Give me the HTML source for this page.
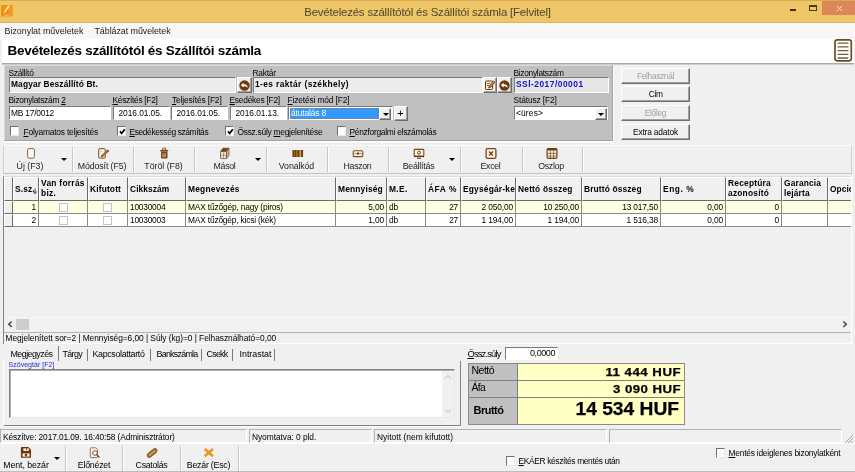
<!DOCTYPE html>
<html lang="hu"><head><meta charset="utf-8"><title>Bevételezés szállítótól és Szállítói számla [Felvitel]</title>
<style>
html,body{margin:0;padding:0;}
body{width:855px;height:472px;overflow:hidden;background:#f0f0f0;font-family:"Liberation Sans",sans-serif;font-size:8.4px;color:#000;position:relative;}
.a{position:absolute;white-space:nowrap;}
.t{margin-left:-0.5px;z-index:2;position:absolute;white-space:nowrap;line-height:10px;font-size:8.4px;}
u{text-decoration:underline;}
#titlebar{left:0;top:0;width:855px;height:22.5px;background:#efc667;border-top:1px solid #d9ae52;border-bottom:1px solid #dcb65c;box-sizing:border-box;}
#menubar{left:0;top:22.5px;width:855px;height:17.5px;background:#f7f7f8;}
#hdr{left:1.5px;top:39px;width:852px;height:23.5px;background:#fff;border-bottom:1px solid #a8a8a8;box-shadow:0 1px 0 #cdcdcd;box-sizing:content-box;}
#gp{left:4px;top:65px;width:609px;height:76px;background:#c0c0c0;border:1px solid;border-color:#d8d8d8 #a4a4a4 #a0a0a0 #d8d8d8;box-sizing:border-box;box-shadow:1px 1.5px 0 #fff;}
.fld{position:absolute;box-sizing:border-box;height:16px;border:1px solid;border-color:#7a7a7a #fff #fff #7a7a7a;background:#fff;font-size:8.4px;line-height:13px;padding-left:1px;white-space:nowrap;overflow:hidden;}
.f2{height:14px;line-height:12px;}
.ro{background:#ececec;font-weight:bold;}
.btn{position:absolute;box-sizing:border-box;background:#f0f0f0;border:1px solid;border-color:#fff #6d6d6d #6d6d6d #fff;box-shadow:inset -1px -1px 0 #a0a0a0;text-align:center;font-size:8.4px;line-height:15px;white-space:nowrap;}
.dis{color:#a0a0a0;}
.cb{position:absolute;box-sizing:border-box;width:9px;height:9.5px;background:#fff;border:1px solid;border-color:#707070 #e8e8e8 #e8e8e8 #707070;}
.sep{position:absolute;width:1px;background:#c6c6c6;box-shadow:1px 0 0 #fff;}
.hc{box-sizing:border-box;background:#f0f0f0;border:1px solid;border-color:#fff #6a6a6a #6a6a6a #fff;}
.hct{position:absolute;left:1px;font-weight:bold;font-size:8.4px;line-height:10px;white-space:nowrap;}
.ic{box-sizing:border-box;background:#f0f0f0;border:1px solid;border-color:#fff #6a6a6a #6a6a6a #fff;}
.gc{box-sizing:border-box;border-right:1px solid #8a8a8a;border-bottom:1px solid #8a8a8a;font-size:8.4px;line-height:13px;padding:0 2px;overflow:hidden;}
.gc.r{text-align:right;}.gc.c{text-align:center;}
.gcb{display:inline-block;box-sizing:border-box;width:9px;height:9px;background:#fff;border:1px solid #c4c4c4;vertical-align:top;margin-top:1.5px;}
.sp{padding-top:1px;box-sizing:border-box;border:1px solid;border-color:#b2b2b2 #fff #fff #b2b2b2;font-size:8.4px;line-height:12px;padding-left:2px;overflow:hidden;}
.arr{position:absolute;width:0;height:0;border-style:solid;border-color:#000 transparent transparent transparent;border-width:3px 3px 0 3px;}
#root{position:absolute;left:0;top:0;width:855px;height:472px;will-change:transform;}
</style></head><body>
<div id="root">
<div class="a" id="titlebar"></div>
<div class="a" style="left:0;width:855px;top:4.5px;text-align:center;font-size:11.4px;line-height:14px;color:#4a452f;letter-spacing:-0.17px;">Bevételezés szállítótól és Szállítói számla [Felvitel]</div>
<div class="a" id="menubar"></div>
<div class="t" style="left:5px;top:26px;font-size:8.9px;letter-spacing:0.00px;color:#222;line-height:11px;">Bizonylat műveletek</div>
<div class="t" style="left:95px;top:26px;font-size:8.9px;letter-spacing:-0.05px;color:#222;line-height:11px;">Táblázat műveletek</div>
<div class="a" id="hdr"></div>
<div class="t" style="left:8px;top:43px;font-size:13.5px;font-weight:bold;letter-spacing:-0.28px;line-height:16px;">Bevételezés szállítótól és Szállítói számla</div>
<div class="a" style="left:822px;top:1px;width:33px;height:14px;background:#dc875a;"></div>
<svg class="a" style="left:835px;top:4px" width="9" height="9" viewBox="0 0 9 9"><path d="M1.8 1.8L7.2 7.2M7.2 1.8L1.8 7.2" stroke="#ffe4d0" stroke-width="1"/></svg>
<div class="a" style="left:809px;top:5px;width:7.5px;height:6px;box-sizing:border-box;border:1px solid #4a3a1a;border-top-width:2px;"></div>
<div class="a" style="left:789.5px;top:9px;width:6px;height:2px;background:#3a2e14;"></div>
<svg class="a" style="left:1.3px;top:5px" width="11.7" height="11.5" viewBox="0 0 11.7 11.5"><rect width="11.7" height="11.5" fill="#f0920f"/><path d="M5.5 0H11.7V11.5H9Z" fill="#f2a02a" opacity="0.6"/><path d="M3 6.8L7.4 0.6L8.6 1.1L4.2 7.4Z" fill="#fff5e6"/><path d="M2.6 8.2L3.4 6.6" stroke="#fbd9a8" stroke-width="0.8"/><path d="M3.6 10.2h4.6" stroke="#f9cf98" stroke-width="0.9"/></svg>
<svg class="a" style="left:834px;top:39px" width="18.5" height="23" viewBox="0 0 18.5 23"><rect x="1" y="0.8" width="16.3" height="21" rx="2.2" fill="#fff" stroke="#6b4a25" stroke-width="1.7"/><path d="M3.6 4.2h10.8M3.6 7.9h10.8M3.6 11.6h10.8M3.6 15.3h10.8M3.6 19h10.8" stroke="#7a5a3a" stroke-width="1.3"/></svg>
<div class="a" id="gp"></div>
<div class="t" style="left:9px;top:68px;letter-spacing:-0.31px;">Szállító</div>
<div class="fld ro" style="left:9px;top:77px;width:227px;letter-spacing:0.13px;">Magyar Beszállító Bt.</div>
<div class="btn" style="left:237px;top:77px;width:15px;height:16px"></div><svg class="a" style="left:239px;top:79.5px" width="11" height="11" viewBox="0 0 11 11"><circle cx="5.5" cy="5.5" r="5.2" fill="#6e3a0c"/><path d="M1.8 5.2 L4.6 2.8 L4.6 4.3 C7.2 4.2 8.8 5.4 8.6 8 C8 6.6 6.8 6.1 4.6 6.2 L4.6 7.6 Z" fill="#fff"/></svg>
<div class="t" style="left:253px;top:68px;letter-spacing:-0.25px;">Raktár</div>
<div class="fld ro" style="left:253px;top:77px;width:230px;letter-spacing:0.40px;">1-es raktár (székhely)</div>
<div class="btn" style="left:483px;top:77px;width:14px;height:16px"></div>
<svg class="a" style="left:484px;top:79px" width="12" height="12" viewBox="0 0 12 12"><rect x="1.5" y="2" width="7" height="8.5" rx="0.8" fill="#f6ead8" stroke="#6e3a0c" stroke-width="1"/><path d="M3 4.5h3M3 6.5h2" stroke="#6e3a0c" stroke-width="0.7"/><path d="M4.6 9 L5.3 6.8 L9.6 2 L11 3.3 L6.8 8.2 Z" fill="#c98a4a" stroke="#6e3a0c" stroke-width="0.8"/></svg>
<div class="btn" style="left:497px;top:77px;width:15px;height:16px"></div><svg class="a" style="left:499px;top:79.5px" width="11" height="11" viewBox="0 0 11 11"><circle cx="5.5" cy="5.5" r="5.2" fill="#6e3a0c"/><path d="M1.8 5.2 L4.6 2.8 L4.6 4.3 C7.2 4.2 8.8 5.4 8.6 8 C8 6.6 6.8 6.1 4.6 6.2 L4.6 7.6 Z" fill="#fff"/></svg>
<div class="t" style="left:514px;top:68px;letter-spacing:-0.30px;">Bizonylatszám</div>
<div class="fld ro" style="left:514px;top:77px;width:95px;letter-spacing:0.50px;color:#1212c6;background:#e6e6e6;">SSl-2017/00001</div>
<div class="t" style="left:9px;top:95px;letter-spacing:-0.26px;">Bizonylatszám <u>2</u></div>
<div class="t" style="left:113px;top:95px;letter-spacing:-0.29px;"><u>K</u>észítés [F2]</div>
<div class="t" style="left:172.5px;top:95px;letter-spacing:-0.14px;"><u>T</u>eljesítés [F2]</div>
<div class="t" style="left:230px;top:95px;letter-spacing:-0.24px;"><u>E</u>sedékes [F2]</div>
<div class="t" style="left:288px;top:95px;letter-spacing:-0.14px;"><u>F</u>izetési mód [F2]</div>
<div class="t" style="left:514px;top:95px;letter-spacing:-0.12px;">Státusz [F2]</div>
<div class="fld f2" style="left:9px;top:106px;width:102px;letter-spacing:-0.21px;">MB 17/0012</div>
<div class="fld f2" style="left:113px;top:106px;width:57px;letter-spacing:-0.06px;padding-left:4.5px;">2016.01.05.</div>
<div class="fld f2" style="left:171px;top:106px;width:57px;letter-spacing:-0.06px;padding-left:4.5px;">2016.01.05.</div>
<div class="fld f2" style="left:230px;top:106px;width:57px;letter-spacing:-0.06px;padding-left:4.5px;">2016.01.13.</div>
<div class="fld f2" style="left:288px;top:106px;width:105px;letter-spacing:-0.13px;"><span style="display:inline-block;width:88.5px;height:11px;margin-top:0.5px;line-height:11px;background:#3399ff;color:#fff;margin-left:0;padding-left:1px;vertical-align:top;box-sizing:border-box;outline:1px dotted rgba(190,110,20,0.75);outline-offset:-1px">átutalás 8</span></div>
<div class="btn " style="left:379px;top:107.5px;width:12px;height:12px;"></div>
<div class="arr" style="left:382.5px;top:112.5px;"></div>
<div class="btn " style="left:394px;top:106px;width:14px;height:14.5px;letter-spacing:0.98px;line-height:12px;font-size:11px;">+</div>
<div class="fld f2" style="left:514px;top:106px;width:94px;letter-spacing:0.16px;">&lt;üres&gt;</div>
<div class="btn " style="left:594.5px;top:107.5px;width:12px;height:12px;"></div>
<div class="arr" style="left:598px;top:112.5px;"></div>
<div class="cb" style="left:10px;top:126px"></div>
<div class="t" style="left:24px;top:127px;letter-spacing:-0.20px;"><u>F</u>olyamatos teljesítés</div>
<div class="cb" style="left:117px;top:126px"><svg class="a" style="left:1px;top:1px" width="7" height="7" viewBox="0 0 7 7"><path d="M0.9 3.3L2.7 5.3L5.8 1.3" fill="none" stroke="#000" stroke-width="1.8"/></svg></div>
<div class="t" style="left:130px;top:127px;letter-spacing:-0.37px;"><u>E</u>sedékesség számítás</div>
<div class="cb" style="left:225px;top:126px"><svg class="a" style="left:1px;top:1px" width="7" height="7" viewBox="0 0 7 7"><path d="M0.9 3.3L2.7 5.3L5.8 1.3" fill="none" stroke="#000" stroke-width="1.8"/></svg></div>
<div class="t" style="left:238px;top:127px;letter-spacing:-0.26px;">Össz.súly <u>m</u>egjelenítése</div>
<div class="cb" style="left:337px;top:126px"></div>
<div class="t" style="left:350px;top:127px;letter-spacing:-0.27px;"><u>P</u>énzforgalmi elszámolás</div>
<div class="btn dis" style="left:621px;top:68px;width:69px;height:16px;letter-spacing:-0.36px;line-height:14.5px;">Felhasznál</div>
<div class="btn " style="left:621px;top:86px;width:69px;height:16px;letter-spacing:-0.62px;line-height:14.5px;">Cím</div>
<div class="btn dis" style="left:621px;top:105px;width:69px;height:16px;letter-spacing:-0.32px;line-height:14.5px;">Előleg</div>
<div class="btn " style="left:621px;top:124px;width:69px;height:16px;letter-spacing:-0.17px;line-height:14.5px;">Extra adatok</div>
<div class="a" style="left:3px;top:145px;width:849px;height:29px;box-sizing:border-box;border-top:1px solid #fafafa;border-bottom:1px solid #c4c4c4;border-right:1px solid #d0d0d0;border-left:1px solid #cfcfcf"></div>
<div class="sep" style="left:72px;top:147px;height:25px;"></div>
<div class="sep" style="left:133px;top:147px;height:25px;"></div>
<div class="sep" style="left:194px;top:147px;height:25px;"></div>
<div class="sep" style="left:266px;top:147px;height:25px;"></div>
<div class="sep" style="left:327px;top:147px;height:25px;"></div>
<div class="sep" style="left:388px;top:147px;height:25px;"></div>
<div class="sep" style="left:460px;top:147px;height:25px;"></div>
<div class="sep" style="left:522px;top:147px;height:25px;"></div>
<div class="sep" style="left:582px;top:147px;height:25px;"></div>
<div class="t" style="left:-14.5px;width:90px;text-align:center;top:161px;font-size:8.8px;letter-spacing:-0.00px;color:#222;">Új (F3)</div>
<div class="t" style="left:57.5px;width:90px;text-align:center;top:161px;font-size:8.8px;letter-spacing:-0.11px;color:#222;">Módosít (F5)</div>
<div class="t" style="left:119.0px;width:90px;text-align:center;top:161px;font-size:8.8px;letter-spacing:-0.02px;color:#222;">Töröl (F8)</div>
<div class="t" style="left:180.0px;width:90px;text-align:center;top:161px;font-size:8.8px;letter-spacing:-0.31px;color:#222;">Másol</div>
<div class="t" style="left:252.0px;width:90px;text-align:center;top:161px;font-size:8.8px;letter-spacing:-0.11px;color:#222;">Vonalkód</div>
<div class="t" style="left:313.0px;width:90px;text-align:center;top:161px;font-size:8.8px;letter-spacing:-0.33px;color:#222;">Haszon</div>
<div class="t" style="left:374.0px;width:90px;text-align:center;top:161px;font-size:8.8px;letter-spacing:-0.23px;color:#222;">Beállítás</div>
<div class="t" style="left:446.0px;width:90px;text-align:center;top:161px;font-size:8.8px;letter-spacing:-0.34px;color:#222;">Excel</div>
<div class="t" style="left:506.5px;width:90px;text-align:center;top:161px;font-size:8.8px;letter-spacing:-0.32px;color:#222;">Oszlop</div>
<div class="arr" style="left:60.5px;top:158px"></div>
<div class="arr" style="left:254.5px;top:158px"></div>
<div class="arr" style="left:448.5px;top:158px"></div>
<svg class="a" style="left:24.0px;top:147px" width="14" height="14" viewBox="0 0 14 14"><rect x="3.6" y="1.6" width="6.8" height="9.6" rx="1.5" fill="#fdfcfa" stroke="#7a6040" stroke-width="0.95"/></svg>
<svg class="a" style="left:96.0px;top:147px" width="14" height="14" viewBox="0 0 14 14"><rect x="2.7" y="1.6" width="6.6" height="9.6" rx="1.2" fill="#f6f2ec" stroke="#7a4a22" stroke-width="1"/><path d="M4.2 4.2h2" stroke="#b9b0a0" stroke-width="0.9"/><path d="M5.9 9.3L12 3.6" stroke="#a46c34" stroke-width="2.3"/><path d="M4.9 10.3L6.9 9.9L5.4 8.4Z" fill="#5a3310"/><path d="M11.2 2.9L12.8 4.4" stroke="#6e3f14" stroke-width="1.2"/></svg>
<svg class="a" style="left:157.0px;top:147px" width="14" height="14" viewBox="0 0 14 14"><rect x="4" y="4.6" width="6.5" height="7" rx="0.8" fill="#7a4510"/><rect x="3.2" y="2.9" width="8" height="1.6" rx="0.4" fill="#7a4510"/><rect x="5.5" y="1.2" width="3.4" height="2" rx="0.6" fill="none" stroke="#7a4510" stroke-width="0.9"/><path d="M6.1 6.3v3.9M8.1 6.3v3.9" stroke="#ecd9b8" stroke-width="0.9"/></svg>
<svg class="a" style="left:218.0px;top:147px" width="14" height="14" viewBox="0 0 14 14"><path d="M2.5 4.5L5 1.2H11L8.5 4.5Z" fill="#7a3f0a" stroke="#6a3808" stroke-width="0.6"/><path d="M8.5 4.5L11 1.2V8.4L8.5 11.6Z" fill="#c9b596" stroke="#6a4a28" stroke-width="0.7"/><rect x="2.5" y="4.5" width="6" height="7.1" rx="0.8" fill="#e8e1d2" stroke="#6a4a28" stroke-width="0.8"/><path d="M5.5 5.5v5.3M3.4 8.3h4.3" stroke="#8a7a60" stroke-width="0.7"/></svg>
<svg class="a" style="left:290.5px;top:147px" width="14" height="14" viewBox="0 0 14 14"><rect x="1.5" y="3" width="10.6" height="7" rx="0.6" fill="#a06a2c"/><path d="M2.3 3v7M4.3 3v7M7.2 3v7" stroke="#6e3f10" stroke-width="1.2"/><path d="M11 3v7" stroke="#6e3f10" stroke-width="2"/><path d="M9.4 3v7" stroke="#e8d4b0" stroke-width="0.6"/></svg>
<svg class="a" style="left:351.0px;top:147px" width="14" height="14" viewBox="0 0 14 14"><rect x="2.2" y="3.7" width="9.6" height="5.9" rx="1.3" fill="#f6f1dc" stroke="#7a4a22" stroke-width="1.1"/><path d="M3 6.6h8" stroke="#8a6a48" stroke-width="0.7"/><ellipse cx="7" cy="6.6" rx="0.9" ry="1.3" fill="#6e2f08"/></svg>
<svg class="a" style="left:412.0px;top:147px" width="14" height="14" viewBox="0 0 14 14"><rect x="2.2" y="2.4" width="9.6" height="7" rx="0.6" fill="#fbf6ec" stroke="#7a4510" stroke-width="1.1"/><path d="M2 9.4h10" stroke="#5a3008" stroke-width="1.3"/><circle cx="7" cy="5.7" r="1.6" fill="#e8d8c0" stroke="#6e4a28" stroke-width="0.9"/><path d="M5 11.3h4" stroke="#6e4a28" stroke-width="1.2"/></svg>
<svg class="a" style="left:484.0px;top:147px" width="14" height="14" viewBox="0 0 14 14"><rect x="2.1" y="1.6" width="9.8" height="9.8" rx="1.4" fill="#fbf6e6" stroke="#7a4010" stroke-width="1.3"/><path d="M5 4.6l4 3.9M9 4.6l-4 3.9" stroke="#7a4010" stroke-width="1.4"/></svg>
<svg class="a" style="left:545.0px;top:147px" width="14" height="14" viewBox="0 0 14 14"><rect x="2.1" y="1.6" width="9.8" height="9.8" rx="1.2" fill="#fdf8ea" stroke="#6e3f10" stroke-width="1.2"/><rect x="2.1" y="1.6" width="9.8" height="1.9" rx="0.8" fill="#6e3f10"/><path d="M5.4 3.5v8M8.6 3.5v8M2 6.4h10M2 9.1h10" stroke="#7a5020" stroke-width="0.75"/></svg>
<div class="a" style="left:3px;top:176px;width:849px;height:168px;box-sizing:border-box;border-left:1px solid #828282;border-top:1px solid #dcdcdc;"></div>
<div class="a hc" style="left:4px;top:177px;width:9px;height:24px;overflow:hidden"><div class="hct" style="top:5.5px;"></div></div>
<div class="a hc" style="left:13px;top:177px;width:26px;height:24px;overflow:hidden"><div class="hct" style="top:5.5px;letter-spacing:0.13px;">S.sz.</div></div>
<div class="a hc" style="left:39px;top:177px;width:49px;height:24px;overflow:hidden"><div class="hct" style="top:0px;letter-spacing:0.28px;">Van forrás<br>biz.</div></div>
<div class="a hc" style="left:88px;top:177px;width:40px;height:24px;overflow:hidden"><div class="hct" style="top:5.5px;letter-spacing:0.16px;">Kifutott</div></div>
<div class="a hc" style="left:128px;top:177px;width:58px;height:24px;overflow:hidden"><div class="hct" style="top:5.5px;letter-spacing:0.08px;">Cikkszám</div></div>
<div class="a hc" style="left:186px;top:177px;width:150px;height:24px;overflow:hidden"><div class="hct" style="top:5.5px;letter-spacing:0.24px;">Megnevezés</div></div>
<div class="a hc" style="left:336px;top:177px;width:51px;height:24px;overflow:hidden"><div class="hct" style="top:5.5px;letter-spacing:0.18px;">Mennyiség</div></div>
<div class="a hc" style="left:387px;top:177px;width:39px;height:24px;overflow:hidden"><div class="hct" style="top:5.5px;letter-spacing:0.35px;">M.E.</div></div>
<div class="a hc" style="left:426px;top:177px;width:35px;height:24px;overflow:hidden"><div class="hct" style="top:5.5px;letter-spacing:0.54px;">ÁFA %</div></div>
<div class="a hc" style="left:461px;top:177px;width:55px;height:24px;overflow:hidden"><div class="hct" style="top:5.5px;letter-spacing:0.20px;">Egységár-ke</div></div>
<div class="a hc" style="left:516px;top:177px;width:66px;height:24px;overflow:hidden"><div class="hct" style="top:5.5px;letter-spacing:0.21px;">Nettó összeg</div></div>
<div class="a hc" style="left:582px;top:177px;width:79px;height:24px;overflow:hidden"><div class="hct" style="top:5.5px;letter-spacing:0.14px;">Bruttó összeg</div></div>
<div class="a hc" style="left:661px;top:177px;width:65px;height:24px;overflow:hidden"><div class="hct" style="top:5.5px;letter-spacing:0.58px;">Eng. %</div></div>
<div class="a hc" style="left:726px;top:177px;width:56px;height:24px;overflow:hidden"><div class="hct" style="top:0px;letter-spacing:0.22px;">Receptúra<br>azonosító</div></div>
<div class="a hc" style="left:782px;top:177px;width:46px;height:24px;overflow:hidden"><div class="hct" style="top:0px;letter-spacing:0.15px;">Garancia<br>lejárta</div></div>
<div class="a hc" style="left:828px;top:177px;width:24px;height:24px;overflow:hidden"><div class="hct" style="top:5.5px;letter-spacing:0.05px;">Opció</div></div>
<div class="a ic" style="left:4px;top:201px;width:9px;height:13px;"></div>
<div class="a gc r" style="left:13px;top:201px;width:26px;height:13px;background:#ffffe1;letter-spacing:-0.26px;">1</div>
<div class="a gc c" style="left:39px;top:201px;width:49px;height:13px;background:#ffffe1;"><div class="gcb"></div></div>
<div class="a gc c" style="left:88px;top:201px;width:40px;height:13px;background:#ffffe1;"><div class="gcb"></div></div>
<div class="a gc l" style="left:128px;top:201px;width:58px;height:13px;background:#ffffe1;letter-spacing:-0.24px;">10030004</div>
<div class="a gc l" style="left:186px;top:201px;width:150px;height:13px;background:#ffffe1;letter-spacing:-0.17px;">MAX tűzőgép, nagy (piros)</div>
<div class="a gc r" style="left:336px;top:201px;width:51px;height:13px;background:#ffffe1;letter-spacing:-0.16px;">5,00</div>
<div class="a gc l" style="left:387px;top:201px;width:39px;height:13px;background:#ffffe1;letter-spacing:-0.20px;">db</div>
<div class="a gc r" style="left:426px;top:201px;width:35px;height:13px;background:#ffffe1;letter-spacing:-0.25px;">27</div>
<div class="a gc r" style="left:461px;top:201px;width:55px;height:13px;background:#ffffe1;letter-spacing:-0.14px;">2 050,00</div>
<div class="a gc r" style="left:516px;top:201px;width:66px;height:13px;background:#ffffe1;letter-spacing:-0.16px;">10 250,00</div>
<div class="a gc r" style="left:582px;top:201px;width:79px;height:13px;background:#ffffe1;letter-spacing:-0.16px;">13 017,50</div>
<div class="a gc r" style="left:661px;top:201px;width:65px;height:13px;background:#ffffe1;letter-spacing:-0.16px;">0,00</div>
<div class="a gc r" style="left:726px;top:201px;width:56px;height:13px;background:#ffffe1;letter-spacing:-0.26px;">0</div>
<div class="a gc l" style="left:782px;top:201px;width:46px;height:13px;background:#ffffe1;"></div>
<div class="a gc l" style="left:828px;top:201px;width:24px;height:13px;background:#ffffe1;"></div>
<div class="a ic" style="left:4px;top:214px;width:9px;height:13px;"></div>
<div class="a gc r" style="left:13px;top:214px;width:26px;height:13px;background:#ffffff;letter-spacing:-0.26px;">2</div>
<div class="a gc c" style="left:39px;top:214px;width:49px;height:13px;background:#ffffff;"><div class="gcb"></div></div>
<div class="a gc c" style="left:88px;top:214px;width:40px;height:13px;background:#ffffff;"><div class="gcb"></div></div>
<div class="a gc l" style="left:128px;top:214px;width:58px;height:13px;background:#ffffff;letter-spacing:-0.24px;">10030003</div>
<div class="a gc l" style="left:186px;top:214px;width:150px;height:13px;background:#ffffff;letter-spacing:-0.18px;">MAX tűzőgép, kicsi (kék)</div>
<div class="a gc r" style="left:336px;top:214px;width:51px;height:13px;background:#ffffff;letter-spacing:-0.16px;">1,00</div>
<div class="a gc l" style="left:387px;top:214px;width:39px;height:13px;background:#ffffff;letter-spacing:-0.20px;">db</div>
<div class="a gc r" style="left:426px;top:214px;width:35px;height:13px;background:#ffffff;letter-spacing:-0.25px;">27</div>
<div class="a gc r" style="left:461px;top:214px;width:55px;height:13px;background:#ffffff;letter-spacing:-0.14px;">1 194,00</div>
<div class="a gc r" style="left:516px;top:214px;width:66px;height:13px;background:#ffffff;letter-spacing:-0.14px;">1 194,00</div>
<div class="a gc r" style="left:582px;top:214px;width:79px;height:13px;background:#ffffff;letter-spacing:-0.14px;">1 516,38</div>
<div class="a gc r" style="left:661px;top:214px;width:65px;height:13px;background:#ffffff;letter-spacing:-0.16px;">0,00</div>
<div class="a gc r" style="left:726px;top:214px;width:56px;height:13px;background:#ffffff;letter-spacing:-0.26px;">0</div>
<div class="a gc l" style="left:782px;top:214px;width:46px;height:13px;background:#ffffff;"></div>
<div class="a gc l" style="left:828px;top:214px;width:24px;height:13px;background:#ffffff;"></div>
<svg class="a" style="left:32px;top:188px" width="6" height="7" viewBox="0 0 6 7"><path d="M3 0.5v4" stroke="#6a6a6a" stroke-width="1.2"/><path d="M0.6 3.4L3 6.4L5.4 3.4Z" fill="#6a6a6a"/></svg>
<div class="a" style="left:4px;top:317px;width:847px;height:16px;background:#f1f1f1;border-top:1px solid #f6f6f6;border-bottom:1px solid #b2b2b2;box-sizing:border-box"></div>
<div class="a" style="left:851px;top:176px;width:1px;height:168px;background:#fff"></div>
<div class="a" style="left:16px;top:319px;width:13px;height:11px;background:#cdcdcd"></div>
<svg class="a" style="left:7px;top:320px" width="6" height="9" viewBox="0 0 6 9"><path d="M4.6 1.5L1.7 4.3L4.6 7.1" fill="none" stroke="#404040" stroke-width="1.4"/></svg>
<svg class="a" style="left:842px;top:320px" width="6" height="9" viewBox="0 0 6 9"><path d="M1.4 1.5L4.3 4.3L1.4 7.1" fill="none" stroke="#404040" stroke-width="1.4"/></svg>
<div class="t" style="left:6px;top:333px;letter-spacing:-0.05px;">Megjelenített sor=2 | Mennyiség=6,00 | Súly (kg)=0 | Felhasználható=0,00</div>
<div class="a" style="left:4px;top:343px;width:848px;height:1px;background:#fff"></div>
<div class="t" style="left:11px;top:349px;font-size:8.9px;letter-spacing:-0.54px;">Megjegyzés</div>
<div class="t" style="left:63px;top:349px;font-size:8.9px;letter-spacing:-0.64px;">Tárgy</div>
<div class="t" style="left:93px;top:349px;font-size:8.9px;letter-spacing:-0.34px;">Kapcsolattartó</div>
<div class="t" style="left:157px;top:349px;font-size:8.9px;letter-spacing:-0.73px;">Bankszámla</div>
<div class="t" style="left:207px;top:349px;font-size:8.9px;letter-spacing:-0.73px;">Csekk</div>
<div class="t" style="left:240px;top:349px;font-size:8.9px;letter-spacing:-0.01px;">Intrastat</div>
<div class="a" style="left:58px;top:346px;width:1px;height:15px;background:#7a7a7a"></div>
<div class="a" style="left:87px;top:349px;width:1px;height:12px;background:#7a7a7a"></div>
<div class="a" style="left:150px;top:349px;width:1px;height:12px;background:#7a7a7a"></div>
<div class="a" style="left:201px;top:349px;width:1px;height:12px;background:#7a7a7a"></div>
<div class="a" style="left:232px;top:349px;width:1px;height:12px;background:#7a7a7a"></div>
<div class="a" style="left:274px;top:349px;width:1px;height:12px;background:#7a7a7a"></div>
<div class="t" style="left:9px;top:360px;font-size:7px;letter-spacing:0.03px;line-height:9px;color:#2828d8;">Szövegtár [F2]</div>
<div class="a" style="left:3px;top:361px;width:458px;height:65px;box-sizing:border-box;border-right:1px solid #828282;border-bottom:1px solid #828282;border-left:1px solid #fff"></div>
<div class="a" style="left:3px;top:426px;width:459px;height:1px;background:#fff"></div>
<div class="a" style="left:9px;top:369px;width:446px;height:49px;box-sizing:border-box;background:#fff;border:1px solid;border-color:#828282 #e8e8e8 #e8e8e8 #828282;box-shadow:inset 1px 1px 0 #b0b0b0"></div>
<div class="a" style="left:442px;top:371px;width:12px;height:46px;background:#f0f0f0"></div>
<svg class="a" style="left:444px;top:374px" width="8" height="6" viewBox="0 0 8 6"><path d="M1 4.5L4 1.5L7 4.5" fill="none" stroke="#b8b8b8" stroke-width="1"/></svg>
<svg class="a" style="left:444px;top:408px" width="8" height="6" viewBox="0 0 8 6"><path d="M1 1.5L4 4.5L7 1.5" fill="none" stroke="#b8b8b8" stroke-width="1"/></svg>
<div class="t" style="left:468px;top:349px;font-size:9.3px;letter-spacing:-0.81px;"><u>Ö</u>ssz.súly</div>
<div class="fld" style="left:505px;top:347px;width:53px;height:13px;text-align:right;padding-right:2px;line-height:11px;font-size:9px;letter-spacing:-0.42px;">0,0000</div>
<div class="a" style="left:468px;top:363px;width:217px;height:62px;box-sizing:border-box;border:1px solid #8a8a8a;background:#ffffc4"></div>
<div class="a" style="left:469px;top:364px;width:49px;height:60px;background:#c0c0c0;border-right:1px solid #808080;box-sizing:border-box"></div>
<div class="a" style="left:469px;top:380px;width:215px;height:1px;background:#808080"></div>
<div class="a" style="left:469px;top:397px;width:215px;height:1px;background:#808080"></div>
<div class="t" style="left:472px;top:364px;font-size:10.5px;letter-spacing:-0.52px;line-height:13px;">Nettó</div>
<div class="t" style="left:472px;top:381px;font-size:10.5px;letter-spacing:-0.76px;line-height:13px;">Áfa</div>
<div class="t" style="left:474px;top:404px;font-size:11px;font-weight:bold;letter-spacing:-0.50px;line-height:13px;">Bruttó</div>
<div class="a" style="left:510.70000000000005px;width:170px;text-align:right;top:365px;font-weight:bold;font-size:11.8px;line-height:14px;transform:scaleX(1.12);transform-origin:100% 50%;-webkit-text-stroke:0.25px #000;letter-spacing:0.45px;">11 444 HUF</div>
<div class="a" style="left:510.70000000000005px;width:170px;text-align:right;top:382px;font-weight:bold;font-size:11.8px;line-height:14px;transform:scaleX(1.12);transform-origin:100% 50%;-webkit-text-stroke:0.25px #000;letter-spacing:0.41px;">3 090 HUF</div>
<div class="a" style="left:509px;width:170px;text-align:right;top:399px;font-weight:bold;font-size:17.8px;line-height:21px;transform:scaleX(1.08);transform-origin:100% 50%;-webkit-text-stroke:0.25px #000;letter-spacing:-0.00px;">14 534 HUF</div>
<div class="a sp" style="left:0px;top:429px;width:247px;height:14px;letter-spacing:-0.12px;">Készítve: 2017.01.09. 16:40:58 (Adminisztrátor)</div>
<div class="a sp" style="left:249px;top:429px;width:123px;height:14px;letter-spacing:-0.06px;">Nyomtatva: 0 pld.</div>
<div class="a sp" style="left:374px;top:429px;width:233px;height:14px;letter-spacing:0.05px;">Nyitott (nem kifutott)</div>
<div class="a sp" style="left:609px;top:429px;width:233px;height:14px;"></div>
<svg class="a" style="left:844px;top:434px" width="10" height="10" viewBox="0 0 10 10"><path d="M9 1L1 9M9 4L4 9M9 7L7 9" stroke="#a0a0a0" stroke-width="1"/></svg>
<div class="a" style="left:0;top:443px;width:855px;height:1px;background:#fff"></div>
<div class="a" style="left:0;top:471px;width:855px;height:1px;background:#bdbdbd"></div>
<div class="sep" style="left:65px;top:446px;height:25px;"></div>
<div class="sep" style="left:122px;top:446px;height:25px;"></div>
<div class="sep" style="left:180px;top:446px;height:25px;"></div>
<div class="sep" style="left:238px;top:446px;height:25px;"></div>
<div class="t" style="left:-18.5px;width:90px;text-align:center;top:460px;font-size:8.8px;letter-spacing:-0.09px;">Ment, bezár</div>
<div class="t" style="left:49.5px;width:90px;text-align:center;top:460px;font-size:8.8px;letter-spacing:-0.22px;">Előnézet</div>
<div class="t" style="left:107.0px;width:90px;text-align:center;top:460px;font-size:8.8px;letter-spacing:-0.30px;">Csatolás</div>
<div class="t" style="left:164.0px;width:90px;text-align:center;top:460px;font-size:8.8px;letter-spacing:-0.22px;">Bezár (Esc)</div>
<div class="arr" style="left:53.5px;top:457px"></div>
<svg class="a" style="left:19.0px;top:446px" width="14" height="14" viewBox="0 0 14 14"><path d="M2.6 1.1H9.4L12 3.7V11.1Q12 11.8 11.3 11.8H2.6Q1.9 11.8 1.9 11.1V1.8Q1.9 1.1 2.6 1.1Z" fill="#6e3408"/><rect x="4.4" y="2.4" width="5.4" height="2.5" fill="#fffaf0"/><rect x="7" y="2.4" width="1.1" height="1.6" fill="#6e3408"/><rect x="3.5" y="7.4" width="7" height="3.2" fill="#fffaf0"/><path d="M5.9 7.8l2.2 2.4M8.1 7.8l-2.2 2.4" stroke="#6e3408" stroke-width="1.1"/></svg>
<svg class="a" style="left:87.5px;top:446px" width="14" height="14" viewBox="0 0 14 14"><path d="M2.3 2.6q0-0.8 0.8-0.8h4.6l1.8 1.8v7.2q0 0.8-0.8 0.8h-5.6q-0.8 0-0.8-0.8z" fill="#f8f1e6" stroke="#8a5f38" stroke-width="0.85"/><circle cx="7" cy="7" r="2.3" fill="#fff" stroke="#7a4a22" stroke-width="0.95"/><path d="M8.7 8.8l2.8 2.6" stroke="#7a4a22" stroke-width="1.3"/></svg>
<svg class="a" style="left:144.5px;top:446px" width="14" height="14" viewBox="0 0 14 14"><path d="M4.3 9.3L9.9 4.7" stroke="#85551e" stroke-width="5" stroke-linecap="round"/><path d="M4.3 9.3L9.9 4.7" stroke="#a87838" stroke-width="2.8" stroke-linecap="round"/><path d="M4.3 9.3L9.9 4.7" stroke="#e6cfa6" stroke-width="1" stroke-linecap="round" stroke-dasharray="1.6 1.2"/></svg>
<svg class="a" style="left:201.5px;top:446px" width="14" height="14" viewBox="0 0 14 14"><path d="M2.7 3L11 10.3M11 3L2.7 10.3" stroke="#f0941e" stroke-width="2.5"/></svg>
<div class="cb" style="left:506px;top:456px"></div>
<div class="t" style="left:519px;top:456px;letter-spacing:-0.34px;"><u>E</u>KÁER készítés mentés után</div>
<div class="cb" style="left:716px;top:448px"></div>
<div class="t" style="left:729px;top:448px;letter-spacing:-0.22px;"><u>M</u>entés ideiglenes bizonylatként</div>
</div>
</body></html>
